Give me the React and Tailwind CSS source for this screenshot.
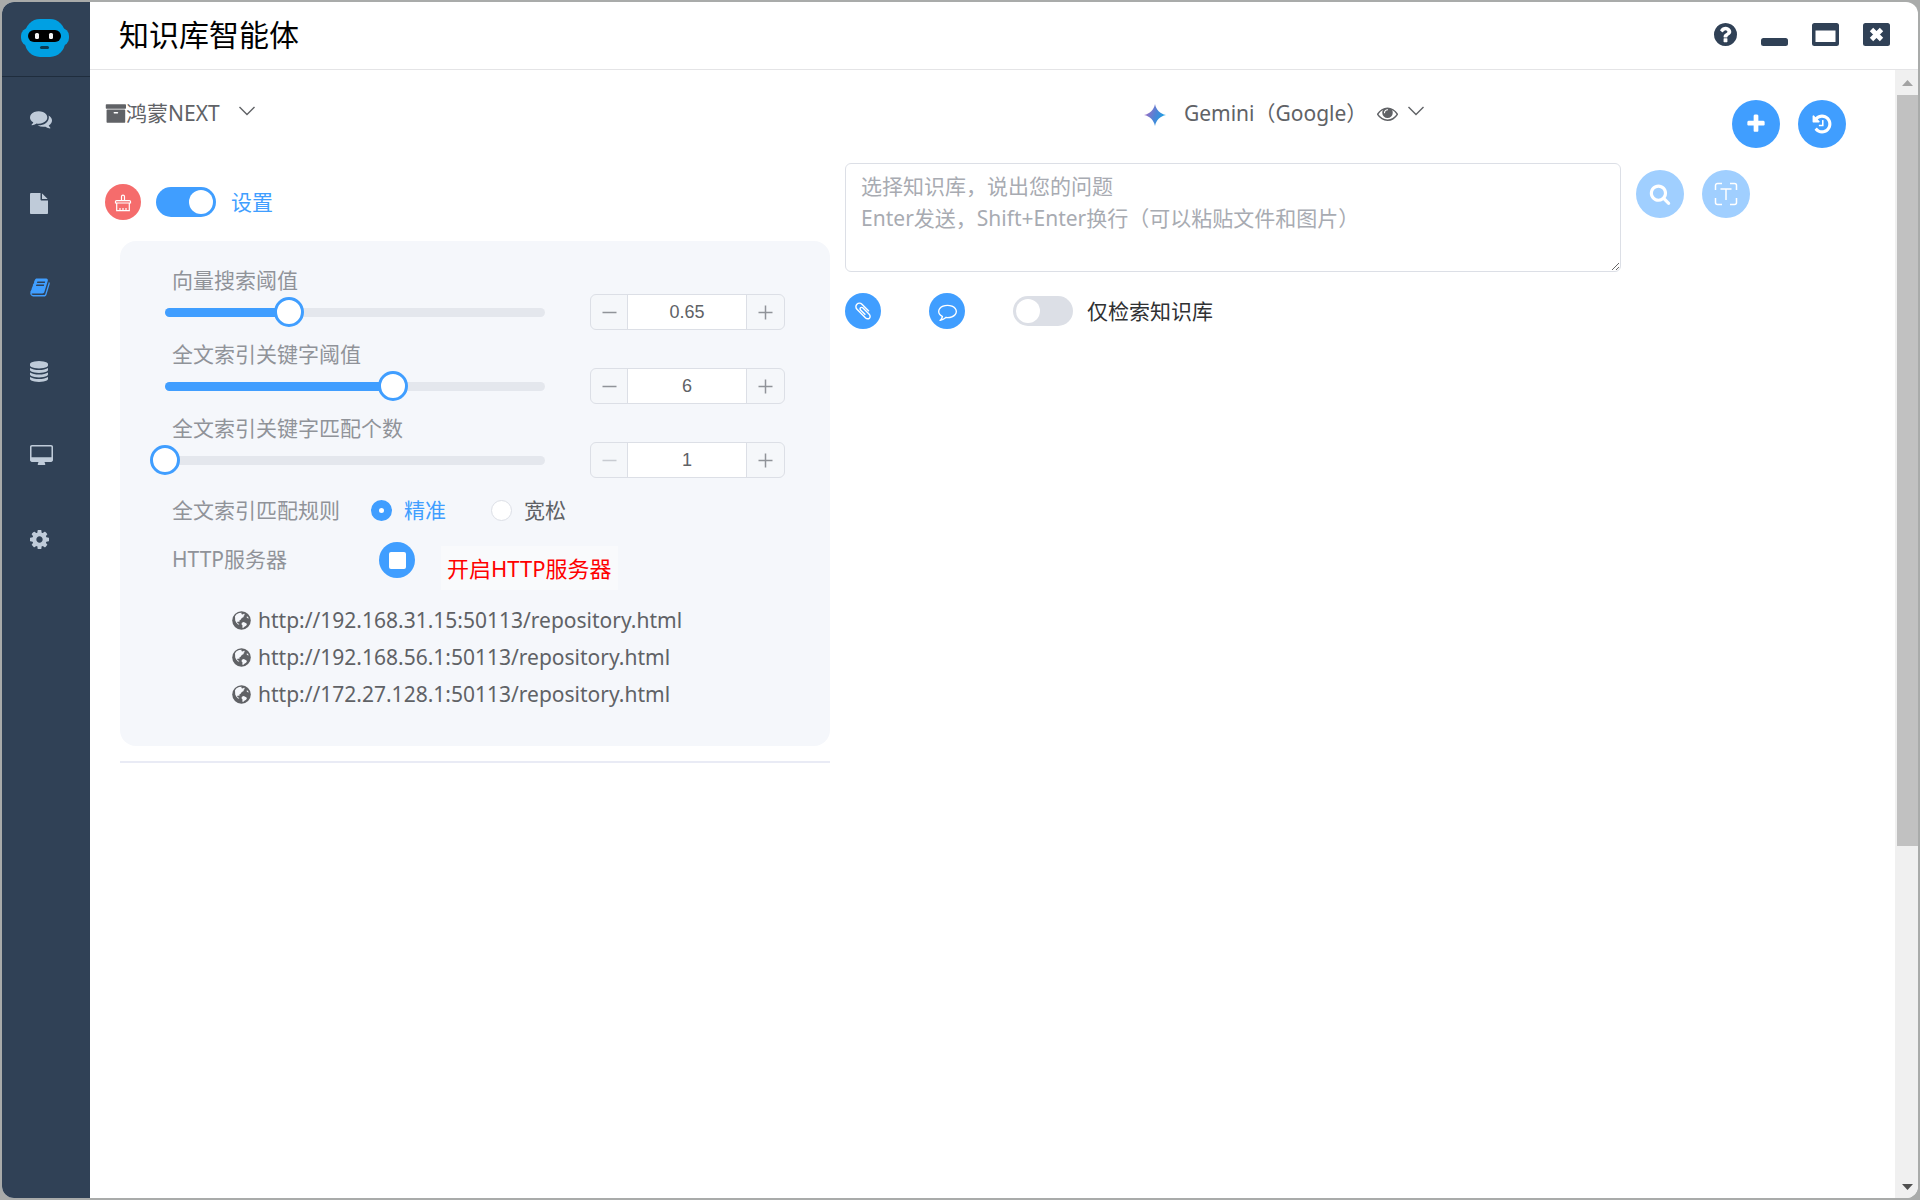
import React, { useState } from "react";

const GLYPHS = {
  book: "M1703 478q40 57 18 129l-275 906q-19 64-76.5 107.500t-122.500 43.500h-923q-77 0-148.500-53.500t-99.500-131.500q-24-67-2-127 0-4 3-27t4-37q1-8-3-21.500t-3-19.500q2-11 8-21t16.500-23.500 16.500-23.500q23-38 45-91.500t30-91.500q3-10 .5-30t-.5-28q3-11 17-28t17-23q21-36 42-92t25-90q1-9-2.500-32t.5-28q4-13 22-30.500t22-22.500q19-26 42.500-84.500t27.500-96.500q1-8-3-25.500t-2-26.500q2-8 9-18t18-23 17-21q8-12 16.500-30.500t15-35 16-36 19.500-32 26.500-23.500 36-11.500 47.500 5.500l-1 3q38-9 51-9h761q74 0 114 56t18 130l-274 906q-36 119-71.500 153.500t-128.500 34.500h-869q-27 0-38 15-11 16-1 43 24 70 144 70h923q29 0 56-15.500t35-41.500l300-987q7-22 5-57 38 15 59 43zm-1064 2q-4 13 2 22.500t20 9.500h608q13 0 25.500-9.500t16.500-22.500l21-64q4-13-2-22.500t-20-9.500h-608q-13 0-25.500 9.500t-16.500 22.500zm-83 256q-4 13 2 22.500t20 9.500h608q13 0 25.500-9.500t16.500-22.500l21-64q4-13-2-22.500t-20-9.500h-608q-13 0-25.500 9.500t-16.500 22.500z",
  comments:
    "M1408 768q0 139-94 257t-256.500 186.500-353.500 68.500q-86 0-176-16-124 88-278 128-36 9-86 16h-3q-11 0-20.500-8t-11.500-21q-1-3-1-6.500t.5-6.500 2-6l2.500-5 3.500-5.500 4-5 4.500-5 4-4.500q5-6 23-25t26-29.500 22.500-29 25-38.500 20.500-44q-124-72-195-177t-71-224q0-139 94-257t256.500-186.500 353.500-68.500 353.500 68.500 256.500 186.500 94 257zm384 256q0 120-71 224.500t-195 176.500q10 24 20.500 44t25 38.500 22.500 29 26 29.500 23 25q1 1 4 4.500t4.500 5 4 5 3.500 5.500l2.500 5 2 6 .5 6.500-1 6.500q-3 14-13 22t-22 7q-50-7-86-16-154-40-278-128-90 16-176 16-271 0-472-132 58 4 88 4 161 0 309-45t264-129q125-92 192-212t67-254q0-77-23-152 129 71 204 178t75 230z",
  file: "M1152 512v-472q22 14 36 28l408 408q14 14 28 36h-472zm-128 32q0 40 28 68t68 28h544v1056q0 40-28 68t-68 28h-1344q-40 0-68-28t-28-68v-1600q0-40 28-68t68-28h800v544z",
  database:
    "M896 768q237 0 443-43t325-127v170q0 69-103 128t-280 93.500-385 34.500-385-34.500-280-93.500-103-128v-170q119 84 325 127t443 43zm0 768q237 0 443-43t325-127v170q0 69-103 128t-280 93.500-385 34.500-385-34.500-280-93.500-103-128v-170q119 84 325 127t443 43zm0-384q237 0 443-43t325-127v170q0 69-103 128t-280 93.500-385 34.500-385-34.500-280-93.500-103-128v-170q119 84 325 127t443 43zm0-1152q208 0 385 34.500t280 93.500 103 128v128q0 69-103 128t-280 93.500-385 34.500-385-34.500-280-93.500-103-128v-128q0-69 103-128t280-93.500 385-34.500z",
  desktop:
    "M1728 992v-832q0-13-9.500-22.500t-22.500-9.500h-1600q-13 0-22.500 9.500t-9.500 22.500v832q0 13 9.500 22.500t22.500 9.500h1600q13 0 22.500-9.500t9.500-22.500zm128-832v1088q0 66-47 113t-113 47h-544q0 37 16 77.500t32 71 16 43.500q0 26-19 45t-45 19h-512q-26 0-45-19t-19-45q0-14 16-44t32-70 16-78h-544q-66 0-113-47t-47-113v-1088q0-66 47-113t113-47h1600q66 0 113 47t47 113z",
  cog: "M1152 896q0-106-75-181t-181-75-181 75-75 181 75 181 181 75 181-75 75-181zm512-109v222q0 12-8 23t-20 13l-185 28q-19 54-39 91 35 50 107 138 10 12 10 25t-9 23q-27 37-99 108t-94 71q-12 0-26-9l-138-108q-44 23-91 38-16 136-29 186-7 28-36 28h-222q-14 0-24.500-8.500t-11.500-21.500l-28-184q-49-16-90-37l-141 107q-10 9-25 9-14 0-25-11-126-114-165-168-7-10-7-23 0-12 8-23 15-21 51-66.500t54-70.500q-27-50-41-99l-183-27q-13-2-21-12.500t-8-23.500v-222q0-12 8-23t19-13l186-28q14-46 39-92-40-57-107-138-10-12-10-24 0-10 9-23 26-36 98.500-107.500t94.500-71.500q13 0 26 10l138 107q44-23 91-38 16-136 29-186 7-28 36-28h222q14 0 24.500 8.500t11.500 21.500l28 184q49 16 90 37l142-107q9-9 24-9 13 0 25 10 129 119 165 170 7 8 7 22 0 12-8 23-15 21-51 66.500t-54 70.500q26 50 41 98l183 28q13 2 21 12.500t8 23.500z",
  help: "M1024 1376v-192q0-14-9-23t-23-9h-192q-14 0-23 9t-9 23v192q0 14 9 23t23 9h192q14 0 23-9t9-23zm256-672q0-88-55.500-163t-138.500-116-170-41q-243 0-371 213-15 24 8 42l132 100q7 6 19 6 16 0 25-12 53-68 86-92 34-24 86-24 48 0 85.500 26t37.500 59q0 38-20 61t-68 45q-63 28-115.500 86.500t-52.500 125.500v36q0 14 9 23t23 9h192q14 0 23-9t9-23q0-19 21.500-49.500t54.500-49.500q32-18 49-28.500t46-35 44.500-48 28-60.500 12.500-81zm384 192q0 209-103 385.500t-279.500 279.500-385.500 103-385.500-103-279.500-279.500-103-385.500 103-385.500 279.500-279.500 385.500-103 385.500 103 279.500 279.500 103 385.500z",
  archive:
    "M1088 832q0-26-19-45t-45-19h-256q-26 0-45 19t-19 45 19 45 45 19h256q26 0 45-19t19-45zm576-192v960q0 26-19 45t-45 19h-1408q-26 0-45-19t-19-45v-960q0-26 19-45t45-19h1408q26 0 45 19t19 45zm64-448v256q0 26-19 45t-45 19h-1536q-26 0-45-19t-19-45v-256q0-26 19-45t45-19h1536q26 0 45 19t19 45z",
  eye: "M1664 960q-152-236-381-353 61 104 61 225 0 185-131.500 316.500t-316.500 131.500-316.500-131.500-131.500-316.500q0-121 61-225-229 117-381 353 133 205 333.500 326.500t434.500 121.500 434.500-121.500 333.500-326.500zm-720-384q0-20-14-34t-34-14q-125 0-214.500 89.500t-89.500 214.500q0 20 14 34t34 14 34-14 14-34q0-86 61-147t147-61q20 0 34-14t14-34zm848 384q0 34-20 69-140 230-376.500 368.500t-499.500 138.500-499.500-139-376.500-368q-20-35-20-69t20-69q140-229 376.500-368t499.500-139 499.500 139 376.500 368q20 35 20 69z",
  plus: "M1600 736v192q0 40-28 68t-68 28h-416v416q0 40-28 68t-68 28h-192q-40 0-68-28t-28-68v-416h-416q-40 0-68-28t-28-68v-192q0-40 28-68t68-28h416v-416q0-40 28-68t68-28h192q40 0 68 28t28 68v416h416q40 0 68 28t28 68z",
  history:
    "M1664 896q0 156-61 298t-164 245-245 164-298 61q-172 0-327-72.500t-264-204.500q-7-10-6.500-22.500t8.500-20.500l137-138q10-9 25-9 16 2 23 12 73 95 179 147t225 52q104 0 198.500-40.500t163.500-109.500 109.500-163.500 40.500-198.500-40.500-198.500-109.500-163.500-163.500-109.500-198.500-40.500q-98 0-188 35.500t-160 101.500l137 138q31 30 14 69-17 40-59 40h-448q-26 0-45-19t-19-45v-448q0-42 40-59 39-17 69 14l130 129q107-101 244.500-156.500t284.500-55.500q156 0 298 61t245 164 164 245 61 298zm-640-288v448q0 14-9 23t-23 9h-320q-14 0-23-9t-9-23v-64q0-14 9-23t23-9h224v-352q0-14 9-23t23-9h64q14 0 23 9t9 23z",
  search:
    "M1216 832q0-185-131.500-316.500t-316.500-131.500-316.500 131.500-131.500 316.500 131.500 316.500 316.500 131.500 316.500-131.500 131.500-316.500zm512 832q0 52-38 90t-90 38q-54 0-90-38l-343-342q-179 124-399 124-143 0-273.500-55.500t-225-150-150-225-55.500-273.500 55.500-273.500 150-225 225-150 273.500-55.500 273.500 55.500 225 150 150 225 55.500 273.500q0 220-124 399l343 343q37 37 37 90z",
  paperclip:
    "M1596 1385q0 117-79 196t-196 79q-135 0-235-100l-777-776q-113-115-113-271 0-159 110-270t269-111q158 0 273 113l605 606q10 10 10 22 0 16-30.500 46.500t-46.500 30.500q-13 0-23-10l-606-607q-79-77-181-77-106 0-179 75t-73 181q0 105 76 181l776 777q63 63 145 63 64 0 106-42t42-106q0-82-63-145l-581-581q-26-24-60-24-29 0-48 19t-19 48q0 32 25 59l410 410q10 10 10 22 0 16-31 47t-47 31q-12 0-22-10l-410-410q-63-61-63-149 0-82 57-139t139-57q88 0 149 63l581 581q100 98 100 235z",
  comment:
    "M896 384q-204 0-381.500 69.500t-282 187.500-104.500 255q0 112 71.500 213.500t201.500 175.500l87 50-27 96q-24 91-70 172 152-63 275-171l43-38 57 6q69 8 130 8 204 0 381.500-69.500t282-187.500 104.500-255-104.500-255-282-187.500-381.500-69.500zm896 512q0 174-120 321.500t-326 233-450 85.500q-70 0-145-8-198 175-460 242-49 14-114 22h-5q-15 0-27-10.500t-16-27.500v-1q-3-4-.5-12t2-10 4.500-9.500l6-9 7-8.500 8-9q7-8 31-34.500t34.500-38 31-39.500 32.500-51 27-59 26-76q-157-89-247.500-220t-90.500-281q0-174 120-321.500t326-233 450-85.500 450 85.500 326 233 120 321.500z",
};

function Glyph({ name, className, viewBox = "0 0 1792 1792" }) {
  return (
    <svg viewBox={viewBox} fill="currentColor" aria-hidden="true" className={`shrink-0 ${className}`}>
      <path d={GLYPHS[name]} />
    </svg>
  );
}

function Chevron() {
  return (
    <svg viewBox="0 0 18 10" fill="none" stroke="currentColor" strokeWidth="1.4" aria-hidden="true" className="h-[10px] w-[18px] shrink-0">
      <path d="M1.500 1l7.500 7.500L16.500 1" />
    </svg>
  );
}

function Robot() {
  return (
    <svg viewBox="0 0 48 38" aria-hidden="true" className="h-[38px] w-12">
      <rect x="0" y="9" width="48" height="18" rx="8" fill="#00a0e3" />
      <rect x="4" y="0" width="40" height="38" rx="15" fill="#00a0e3" />
      <rect x="7" y="11" width="33" height="12" rx="6" fill="#000" />
      <rect x="14" y="14" width="4" height="6" rx="1.500" fill="#f4f4f4" />
      <rect x="28" y="14" width="4" height="6" rx="1.500" fill="#f4f4f4" />
      <rect x="19" y="27" width="9" height="3" rx="1.500" fill="#0b3a52" />
    </svg>
  );
}

function Globe() {
  return (
    <svg viewBox="0 0 19 19" aria-hidden="true" className="size-[19px] shrink-0">
      <circle cx="9.500" cy="9.500" r="9.300" fill="#606266" />
      <path
        fill="#f5f7fb"
        d="M3 5.200L4.500 3.300 7 2.100 9.800 1.700 9.200 3l1.600.6 1.400-1 .5 1.500-1.500 1.200 1 .5-2.400 1.300-1.200 1.600-1.400 1 .3 1.300-1.600-.6-.9 1.200 1.400.9 1 1-1.400-.1-1.800-2L3.200 9.500zM9.900 11.800l1.800-.7 2 .9 1.300 1-.9 1.700-1.700 1.100-1.300 1.200-.8-.4.200-2-1-1.400zM14.800 5.400l1.200.3.700 1.700-1-.1-1.100-1z"
      />
    </svg>
  );
}

const NAV = [
  { label: "聊天", name: "comments", size: "size-[22px]" },
  { label: "文件", name: "file", size: "h-[21px] w-[18px]", viewBox: "128 0 1536 1792" },
  { label: "知识库", name: "book", size: "h-[21px] w-5", viewBox: "64 0 1664 1792", active: true },
  { label: "数据库", name: "database", size: "h-[21px] w-[18px]", viewBox: "128 0 1536 1792" },
  { label: "桌面", name: "desktop", size: "h-5 w-[23px]", viewBox: "-64 0 1920 1664" },
  { label: "设置", name: "cog", size: "size-[19px]", viewBox: "128 128 1536 1536" },
];

function Sidebar() {
  return (
    <aside className="flex w-[88px] shrink-0 flex-col bg-[#304156]">
      <div className="flex h-[75px] items-start justify-start border-b border-[#1f2d3d] pt-[17px] pl-[19px]">
        <Robot />
      </div>
      <nav className="flex flex-col">
        {NAV.map((item) => (
          <button
            key={item.name}
            type="button"
            aria-label={item.label}
            className={`flex h-[84px] items-center pl-7 ${item.active ? "text-[#409eff]" : "text-[#bfcbd9]"}`}
          >
            <Glyph name={item.name} className={item.size} viewBox={item.viewBox} />
          </button>
        ))}
      </nav>
    </aside>
  );
}

function TitleBar() {
  return (
    <header className="flex h-[68px] shrink-0 items-start justify-between border-b border-[#e4e4e6] pr-7 pl-[29px]">
      <h1 className="pt-[11px] text-[30px] leading-[44px] text-black">知识库智能体</h1>
      <div className="flex items-center gap-6 pt-[21px] text-[#304156]">
        <button type="button" aria-label="帮助">
          <Glyph name="help" className="size-[23px]" viewBox="128 128 1536 1536" />
        </button>
        <button type="button" aria-label="最小化">
          <svg viewBox="0 0 27 23" fill="currentColor" className="h-[23px] w-[27px]">
            <rect x="0" y="15" width="27" height="8" rx="2.500" />
          </svg>
        </button>
        <button type="button" aria-label="最大化">
          <svg viewBox="0 0 27 23" fill="currentColor" fillRule="evenodd" className="h-[23px] w-[27px]">
            <path d="M2.500 0h22A2.500 2.500 0 0 1 27 2.500v18a2.500 2.500 0 0 1-2.500 2.500h-22A2.500 2.500 0 0 1 0 20.500v-18A2.500 2.500 0 0 1 2.500 0zM3.500 7.500v11.500h20V7.500z" />
          </svg>
        </button>
        <button type="button" aria-label="关闭">
          <svg viewBox="0 0 27 23" className="h-[23px] w-[27px]">
            <rect width="27" height="23" rx="2.500" fill="currentColor" />
            <path d="M8.500 6.500l10 10M18.500 6.500l-10 10" stroke="#fff" strokeWidth="4.800" />
          </svg>
        </button>
      </div>
    </header>
  );
}

function Switch({ checked, onChange, label, labelClass, gap }) {
  return (
    <label className={`flex items-center ${gap}`}>
      <input type="checkbox" role="switch" checked={checked} onChange={(e) => onChange(e.target.checked)} className="peer sr-only" />
      <span className="flex h-[30px] w-[60px] rounded-full bg-[#dcdfe6] p-[3px] peer-checked:justify-end peer-checked:bg-[#409eff]">
        <span className="size-6 rounded-full bg-white" />
      </span>
      <span className={`text-[21px] leading-7 ${labelClass}`}>{label}</span>
    </label>
  );
}

function StepIcon({ plus }) {
  return (
    <svg viewBox="0 0 15 15" stroke="currentColor" strokeWidth="1.500" aria-hidden="true" className="size-[15px]">
      <path d={plus ? "M.5 7.500h14M7.500.5v14" : "M.5 7.500h14"} />
    </svg>
  );
}

function Threshold({ id, label, min, max, step, initial }) {
  const [value, setValue] = useState(initial);
  const percent = ((value - min) / (max - min)) * 100;
  const change = (next) => setValue(Math.min(max, Math.max(min, Number(next.toFixed(2)))));
  return (
    <div>
      <label htmlFor={id} className="block pl-[7px] text-[21px] leading-7 text-[#909399]">
        {label}
      </label>
      <div className="flex items-center gap-[45px]">
        <div className="relative flex h-9 flex-1 items-center">
          <div className="h-[9px] w-full overflow-hidden rounded-full bg-[#e4e7ed]">
            <div className="h-full bg-[#409eff]" style={{ width: `${percent}%` }} />
          </div>
          <input
            id={id}
            type="range"
            min={min}
            max={max}
            step={step}
            value={value}
            onChange={(e) => change(Number(e.target.value))}
            className="absolute inset-y-0 -right-[15px] -left-[15px] cursor-pointer appearance-none bg-transparent [&::-webkit-slider-thumb]:size-[30px] [&::-webkit-slider-thumb]:appearance-none [&::-webkit-slider-thumb]:rounded-full [&::-webkit-slider-thumb]:border-3 [&::-webkit-slider-thumb]:border-[#409eff] [&::-webkit-slider-thumb]:bg-white"
          />
        </div>
        <div className="flex h-9 w-[195px] overflow-hidden rounded-md border border-[#dcdfe6] bg-[#f5f7fa]">
          <button
            type="button"
            aria-label={`${label} 减少`}
            disabled={value <= min}
            onClick={() => change(value - step)}
            className="flex w-9 items-center justify-center text-[#909399] disabled:text-[#c8cbd1]"
          >
            <StepIcon />
          </button>
          <input
            type="text"
            inputMode="decimal"
            aria-label={`${label} 数值`}
            value={value}
            onChange={(e) => change(Number(e.target.value) || min)}
            className="min-w-0 flex-1 border-x border-[#dcdfe6] bg-white text-center font-['Liberation_Sans'] text-lg text-[#606266] outline-none"
          />
          <button
            type="button"
            aria-label={`${label} 增加`}
            disabled={value >= max}
            onClick={() => change(value + step)}
            className="flex w-[37px] items-center justify-center text-[#909399]"
          >
            <StepIcon plus />
          </button>
        </div>
      </div>
    </div>
  );
}

function Radio({ label, checked, onChange }) {
  return (
    <label className="flex items-center gap-3">
      <input
        type="radio"
        name="match-rule"
        checked={checked}
        onChange={onChange}
        className="size-[21px] appearance-none rounded-full border border-[#dcdfe6] bg-white checked:border-8 checked:border-[#409eff]"
      />
      <span className={`text-[21px] leading-7 ${checked ? "text-[#409eff]" : "text-[#606266]"}`}>{label}</span>
    </label>
  );
}

const SERVERS = [
  "http://192.168.31.15:50113/repository.html",
  "http://192.168.56.1:50113/repository.html",
  "http://172.27.128.1:50113/repository.html",
];

function Settings() {
  const [exact, setExact] = useState(true);
  return (
    <section className="rounded-2xl bg-[#f5f7fb] px-[45px] pt-[25px] pb-[33px]">
      <div className="flex flex-col gap-[10px]">
        <Threshold id="vector" label="向量搜索阈值" min={0.49} max={0.98} step={0.01} initial={0.65} />
        <Threshold id="keyword" label="全文索引关键字阈值" min={0} max={10} step={1} initial={6} />
        <Threshold id="matches" label="全文索引关键字匹配个数" min={1} max={10} step={1} initial={1} />
      </div>

      <div role="radiogroup" aria-labelledby="rule-label" className="mt-[18px] flex items-center pl-[7px]">
        <span id="rule-label" className="w-[199px] text-[21px] leading-7 text-[#909399]">
          全文索引匹配规则
        </span>
        <div className="flex gap-[45px]">
          <Radio label="精准" checked={exact} onChange={() => setExact(true)} />
          <Radio label="宽松" checked={!exact} onChange={() => setExact(false)} />
        </div>
      </div>

      <div className="mt-[18px] flex items-start pl-[7px]">
        <span className="w-[207px] text-[21px] leading-[34px] text-[#909399]">HTTP服务器</span>
        <button type="button" aria-label="停止HTTP服务器" className="flex size-9 items-center justify-center rounded-full bg-[#409eff]">
          <span className="size-[17px] rounded-xs bg-white" />
        </button>
        <span className="mt-1 ml-[26px] bg-[#f9fafc] px-[6px] text-[22px] leading-[44px] text-[#ff0000]">开启HTTP服务器</span>
      </div>

      <ul className="mt-3 pl-[67px]">
        {SERVERS.map((url) => (
          <li key={url} className="flex items-center leading-[37px]">
            <a href={url} className="flex items-center gap-[7px] text-[21px] leading-[37px] text-[#606266]">
              <Globe />
              {url}
            </a>
          </li>
        ))}
      </ul>
    </section>
  );
}

function RoundButton({ label, large, disabled, children }) {
  return (
    <button
      type="button"
      aria-label={label}
      disabled={disabled}
      className={`flex shrink-0 items-center justify-center rounded-full bg-[#409eff] text-white disabled:bg-[#a0cfff] ${large ? "size-12" : "size-9"}`}
    >
      {children}
    </button>
  );
}

function LeftPane() {
  const [open, setOpen] = useState(true);
  return (
    <div className="pt-[21px] pl-[15px]">
      <div className="flex items-center gap-[15px]">
        <button type="button" aria-label="清空" className="flex size-9 items-center justify-center rounded-full bg-[#f56c6c] text-white">
          <svg viewBox="0 0 18 18" fill="none" stroke="currentColor" strokeWidth="1.200" aria-hidden="true" className="mt-px size-[18px]">
            <path d="M7.500 6.500V2.600a1.500 1.500 0 0 1 3 0V6.500M1.500 9V7.600a1 1 0 0 1 1-1h13a1 1 0 0 1 1 1V9zM2.700 9v7.700h12.600V9M6 16.500v-2.500M9 16.500v-2.500M12 16.500v-2.500" />
          </svg>
        </button>
        <Switch checked={open} onChange={setOpen} label="设置" labelClass="text-[#409eff]" gap="gap-[15px]" />
      </div>
      <div className="mt-[21px] ml-[15px]">
        {open && <Settings />}
        <hr className="mt-[15px] border-0 border-t-2 border-[#e9ebf5]" />
      </div>
    </div>
  );
}

function RightPane() {
  const [only, setOnly] = useState(false);
  return (
    <div className="pr-[145px] pl-[15px]">
      <div className="flex items-start">
        <textarea
          aria-label="问题"
          placeholder={"选择知识库，说出您的问题\nEnter发送，Shift+Enter换行（可以粘贴文件和图片）"}
          className="h-[109px] min-w-0 flex-1 rounded-md border border-[#dcdfe6] px-[15px] py-[6px] text-[21px] leading-8 text-[#606266] outline-none placeholder:text-[#a8abb2]"
        />
        <div className="mt-[7px] ml-[15px] flex gap-[18px]">
          <RoundButton label="搜索" large disabled>
            <Glyph name="search" className="size-[22px]" />
          </RoundButton>
          <RoundButton label="识别文字" large disabled>
            <svg viewBox="0 0 24 24" fill="none" stroke="currentColor" strokeWidth="1.500" aria-hidden="true" className="size-6">
              <path d="M1.500 8V3.500a2 2 0 0 1 2-2H8M16 1.500h4.500a2 2 0 0 1 2 2V8M22.500 16v4.500a2 2 0 0 1-2 2H16M8 22.500H3.500a2 2 0 0 1-2-2V16M6.500 7h11M12 7v11" />
            </svg>
          </RoundButton>
        </div>
      </div>
      <div className="mt-[21px] flex items-center gap-12">
        <RoundButton label="附件">
          <Glyph name="paperclip" className="size-5" />
        </RoundButton>
        <RoundButton label="对话">
          <Glyph name="comment" className="size-[19px]" />
        </RoundButton>
        <Switch checked={only} onChange={setOnly} label="仅检索知识库" labelClass="text-[#303133]" gap="gap-[14px]" />
      </div>
    </div>
  );
}

function TopRow() {
  return (
    <div className="grid grid-cols-[7fr_5fr]">
      <div className="flex items-start pl-[15px]">
        <button type="button" className="flex h-[26px] items-center text-[21px] leading-[26px] text-[#606266]">
          <Glyph name="archive" className="h-[19px] w-[21px]" viewBox="0 128 1728 1536" />
          鸿蒙NEXT
          <span className="mb-1 ml-[18px]">
            <Chevron />
          </span>
        </button>
      </div>
      <div className="flex items-start justify-between pr-[49px]">
        <button type="button" className="flex h-[26px] items-center pl-px text-[21px] leading-[26px] text-[#606266]">
          <svg viewBox="0 0 22 22" aria-hidden="true" className="mt-1 size-[22px]">
            <defs>
              <linearGradient id="spark" x1="0" y1="0.300" x2="1" y2="0.700">
                <stop offset="0.100" stopColor="#9a6fc4" />
                <stop offset="0.500" stopColor="#4f83d6" />
                <stop offset="0.900" stopColor="#1ba1e3" />
              </linearGradient>
            </defs>
            <path fill="url(#spark)" d="M11 0C12.200 6 16 9.800 22 11 16 12.200 12.200 16 11 22 9.800 16 6 12.200 0 11 6 9.800 9.800 6 11 0z" />
          </svg>
          <span className="ml-[18px]">Gemini（Google）</span>
          <Glyph name="eye" className="ml-[10px] size-[21px]" />
          <span className="mb-1 ml-[9px]">
            <Chevron />
          </span>
        </button>
        <div className="flex gap-[18px]">
          <RoundButton label="新建" large>
            <Glyph name="plus" className="size-[22px]" />
          </RoundButton>
          <RoundButton label="历史" large>
            <Glyph name="history" className="size-[22px]" />
          </RoundButton>
        </div>
      </div>
    </div>
  );
}

function ScrollRail() {
  return (
    <div aria-hidden="true" className="flex w-[23px] shrink-0 flex-col bg-[#f0f0f0] pl-[2px]">
      <svg viewBox="0 0 21 25" className="h-[25px] w-[21px]">
        <path d="M5 16h11l-5.500-6z" fill="#a3a3a3" />
      </svg>
      <div className="flex-[697] bg-[#c1c1c1]" />
      <div className="flex-[303]" />
      <svg viewBox="0 0 21 25" className="h-[25px] w-[21px]">
        <path d="M5 11h11l-5.500 6z" fill="#505050" />
      </svg>
    </div>
  );
}

export default function App() {
  return (
    <div className="h-screen bg-[#a9abaa] p-[2px] font-['Noto_Sans','Noto_Sans_CJK_SC',sans-serif]">
      <div className="flex h-full overflow-hidden rounded-xl bg-white">
        <Sidebar />
        <div className="flex min-w-0 flex-1 flex-col">
          <TitleBar />
          <div className="flex min-h-0 flex-1">
            <main className="min-w-0 flex-1 pt-[30px]">
              <TopRow />
              <div className="mt-[15px] grid grid-cols-[41fr_59fr]">
                <LeftPane />
                <RightPane />
              </div>
            </main>
            <ScrollRail />
          </div>
        </div>
      </div>
    </div>
  );
}
